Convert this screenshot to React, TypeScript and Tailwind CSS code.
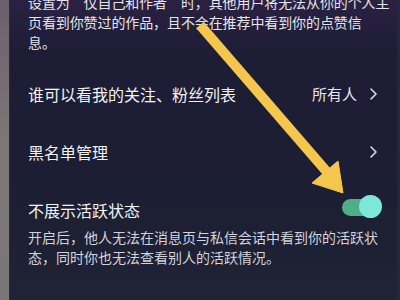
import React from "react";

const font = { fontFamily: '"Noto Sans CJK SC", "Noto Sans", sans-serif' };

function Chevron() {
  return (
    <svg width="9" height="14" viewBox="0 0 9 14" className="block">
      <path d="M2 2 L7 7 L2 12" fill="none" stroke="#d8d8e0" strokeWidth="1.6" strokeLinecap="round" strokeLinejoin="round" />
    </svg>
  );
}

export default function App() {
  return (
    <div className="relative flex w-[400px] h-[300px] overflow-hidden bg-[#1e2033]" style={font}>
      <div className="w-[9px] shrink-0 h-full bg-gradient-to-b from-[#6c5f6e] via-[#7d7877] to-[#7a7675]" />
      <div className="w-[1px] shrink-0 h-full bg-[#2a2a30]" />
      <div className="flex-1 min-w-0 h-full flex flex-col pl-[18px] pr-[19px] bg-[linear-gradient(to_bottom,#2a2142_0%,#1d1d35_18%,#1c1e33_60%,#1f2335_100%)] text-[#f2f2f5]">
        <p className="mt-[-8px] text-[14px] leading-[20px] text-[#e4e4ea] whitespace-nowrap tracking-[-0.1px]">
          设置为“仅自己和作者”时，其他用户将无法从你的个人主
          <br />
          页看到你赞过的作品，且不会在推荐中看到你的点赞信
          <br />
          息。
        </p>
        <div className="mt-[30px] h-[24px] flex items-center justify-between">
          <span className="text-[16px] leading-[24px]">谁可以看我的关注、粉丝列表</span>
          <div className="flex items-center gap-[12px]">
            <span className="text-[15px] leading-[24px] text-[#e6e6ec]">所有人</span>
            <Chevron />
          </div>
        </div>
        <div className="mt-[34px] h-[24px] flex items-center justify-between">
          <span className="text-[16px] leading-[24px]">黑名单管理</span>
          <Chevron />
        </div>
        <div className="mt-[34px] h-[24px] flex items-center justify-between">
          <span className="text-[16px] leading-[24px]">不展示活跃状态</span>
          <div className="relative w-[40px] h-[24px] mr-[-4px] mt-[-6px]">
            <div className="absolute left-0 top-[4px] w-[34px] h-[17px] rounded-full bg-[#4fae86]" />
            <div className="absolute right-0 top-0 w-[23px] h-[23px] rounded-full bg-[#7ee8d8]" />
          </div>
        </div>
        <p className="mt-[5px] text-[14px] leading-[20px] text-[#d2d3db] whitespace-nowrap">
          开启后，他人无法在消息页与私信会话中看到你的活跃状
          <br />
          态，同时你也无法查看别人的活跃情况。
        </p>
      </div>
      <div className="w-[3px] shrink-0 h-full bg-[#26283a]" />
      <svg className="absolute left-0 top-0 pointer-events-none" width="400" height="300" viewBox="0 0 400 300">
        <line x1="200" y1="25" x2="327" y2="172" stroke="#f4c64e" strokeWidth="10" strokeLinecap="butt" />
        <polygon points="312,183 338,161 343,193" fill="#f4c64e" stroke="#f4c64e" strokeWidth="1" strokeLinejoin="round" />
      </svg>
    </div>
  );
}
